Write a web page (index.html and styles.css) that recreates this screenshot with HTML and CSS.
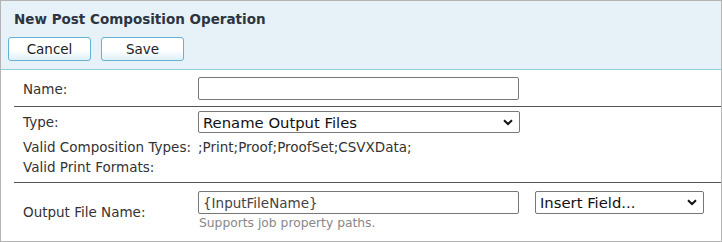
FILE: index.html
```html
<!DOCTYPE html>
<html>
<head>
<meta charset="utf-8">
<link rel="stylesheet" href="styles.css">
</head>
<body>
<div class="panel">
  <div class="header">
    <div class="title">New Post Composition Operation</div>
    <div class="actions">
      <button class="btn">Cancel</button>
      <button class="btn">Save</button>
    </div>
  </div>
  <div class="form">
    <div class="section sec-name">
      <div class="row row-center">
        <div class="label">Name:</div>
        <div class="field"><input class="text" type="text" value=""></div>
      </div>
    </div>
    <div class="section sec-type">
      <div class="row row-center">
        <div class="label">Type:</div>
        <div class="field">
          <div class="select wide"><span>Rename Output Files</span><svg class="chev" width="10" height="7" viewBox="0 0 10 7"><path d="M1 1.2 L5 5 L9 1.2" fill="none" stroke="#111" stroke-width="2"/></svg></div>
        </div>
      </div>
      <div class="row info-row">
        <div class="label">Valid Composition Types:</div>
        <div class="info">;Print;Proof;ProofSet;CSVXData;</div>
      </div>
      <div class="row info-row">
        <div class="label">Valid Print Formats:</div>
        <div class="info"></div>
      </div>
    </div>
    <div class="section sec-out">
      <div class="row row-top">
        <div class="label out-label">Output File Name:</div>
        <div class="field outline">
          <div class="outcol">
            <input class="text" type="text" value="{InputFileName}">
            <div class="hint">Supports job property paths.</div>
          </div>
          <div class="select narrow"><span>Insert Field...</span><svg class="chev" width="10" height="7" viewBox="0 0 10 7"><path d="M1 1.2 L5 5 L9 1.2" fill="none" stroke="#111" stroke-width="2"/></svg></div>
        </div>
      </div>
    </div>
  </div>
</div>
</body>
</html>
```
FILE: styles.css
```css
html, body { margin: 0; padding: 0; background: #fff; }
body { font-family: "DejaVu Sans", Verdana, sans-serif; font-size: 13.5px; color: #333; }
.panel {
  width: 720px; height: 240px;
  border: 1px solid #b4b4b4;
  overflow: hidden;
}
.header {
  background: #e7f2f8;
  border-bottom: 1px solid #8fd0e0;
  height: 69px;
  box-sizing: border-box;
  padding: 11px 0 0 7px;
}
.title { font-weight: bold; font-size: 13.5px; color: #2d3540; padding-left: 6px; height: 25px; line-height: 15px; }
.actions { display: flex; gap: 10px; }
.btn {
  width: 83px; height: 24px;
  border: 1px solid #62b3d3;
  border-radius: 3px;
  background: linear-gradient(#ffffff 0%, #ffffff 55%, #dff0f8 100%);
  font-family: "DejaVu Sans", Verdana, sans-serif;
  font-size: 13.5px; color: #222;
  padding: 0;
}
.form { margin-left: 13px; }
.section { border-bottom: 1px solid #555; box-sizing: border-box; }
.sec-out { border-bottom: none; }
.row { display: flex; }
.row-center { align-items: center; }
.row-top { align-items: flex-start; }
.label { width: 175px; flex: none; padding-left: 9px; white-space: nowrap; color: #333; line-height: 20px; }
.sec-name { height: 37px; padding-top: 7px; }
.sec-type { height: 76px; padding-top: 4px; }
.sec-type .row-center { margin-bottom: 4px; }
.info-row { height: 20px; line-height: 20px; }
.info { color: #333; }
.sec-out { padding-top: 8px; }
.out-label { margin-top: 11px; }
.text {
  width: 321px; height: 23px;
  box-sizing: border-box;
  border: 1px solid #777;
  border-radius: 2px;
  padding: 0 4px;
  font-family: "DejaVu Sans", Verdana, sans-serif;
  font-size: 13.5px; color: #444;
  display: block;
  margin: 0;
}
.select {
  box-sizing: border-box;
  height: 22px;
  border: 1px solid #777;
  border-radius: 2px;
  display: flex; align-items: center; justify-content: space-between;
  padding: 0 6px 0 4px;
  font-size: 14.8px; color: #111;
  background: #fff;
}
.wide { width: 322px; }
.narrow { width: 169px; height: 23px; }
.outline { display: flex; align-items: flex-start; gap: 16px; }
.outcol { display: flex; flex-direction: column; }
.hint { font-size: 12.3px; color: #888; padding-left: 1px; line-height: 14px; margin-top: 2px; }
```
